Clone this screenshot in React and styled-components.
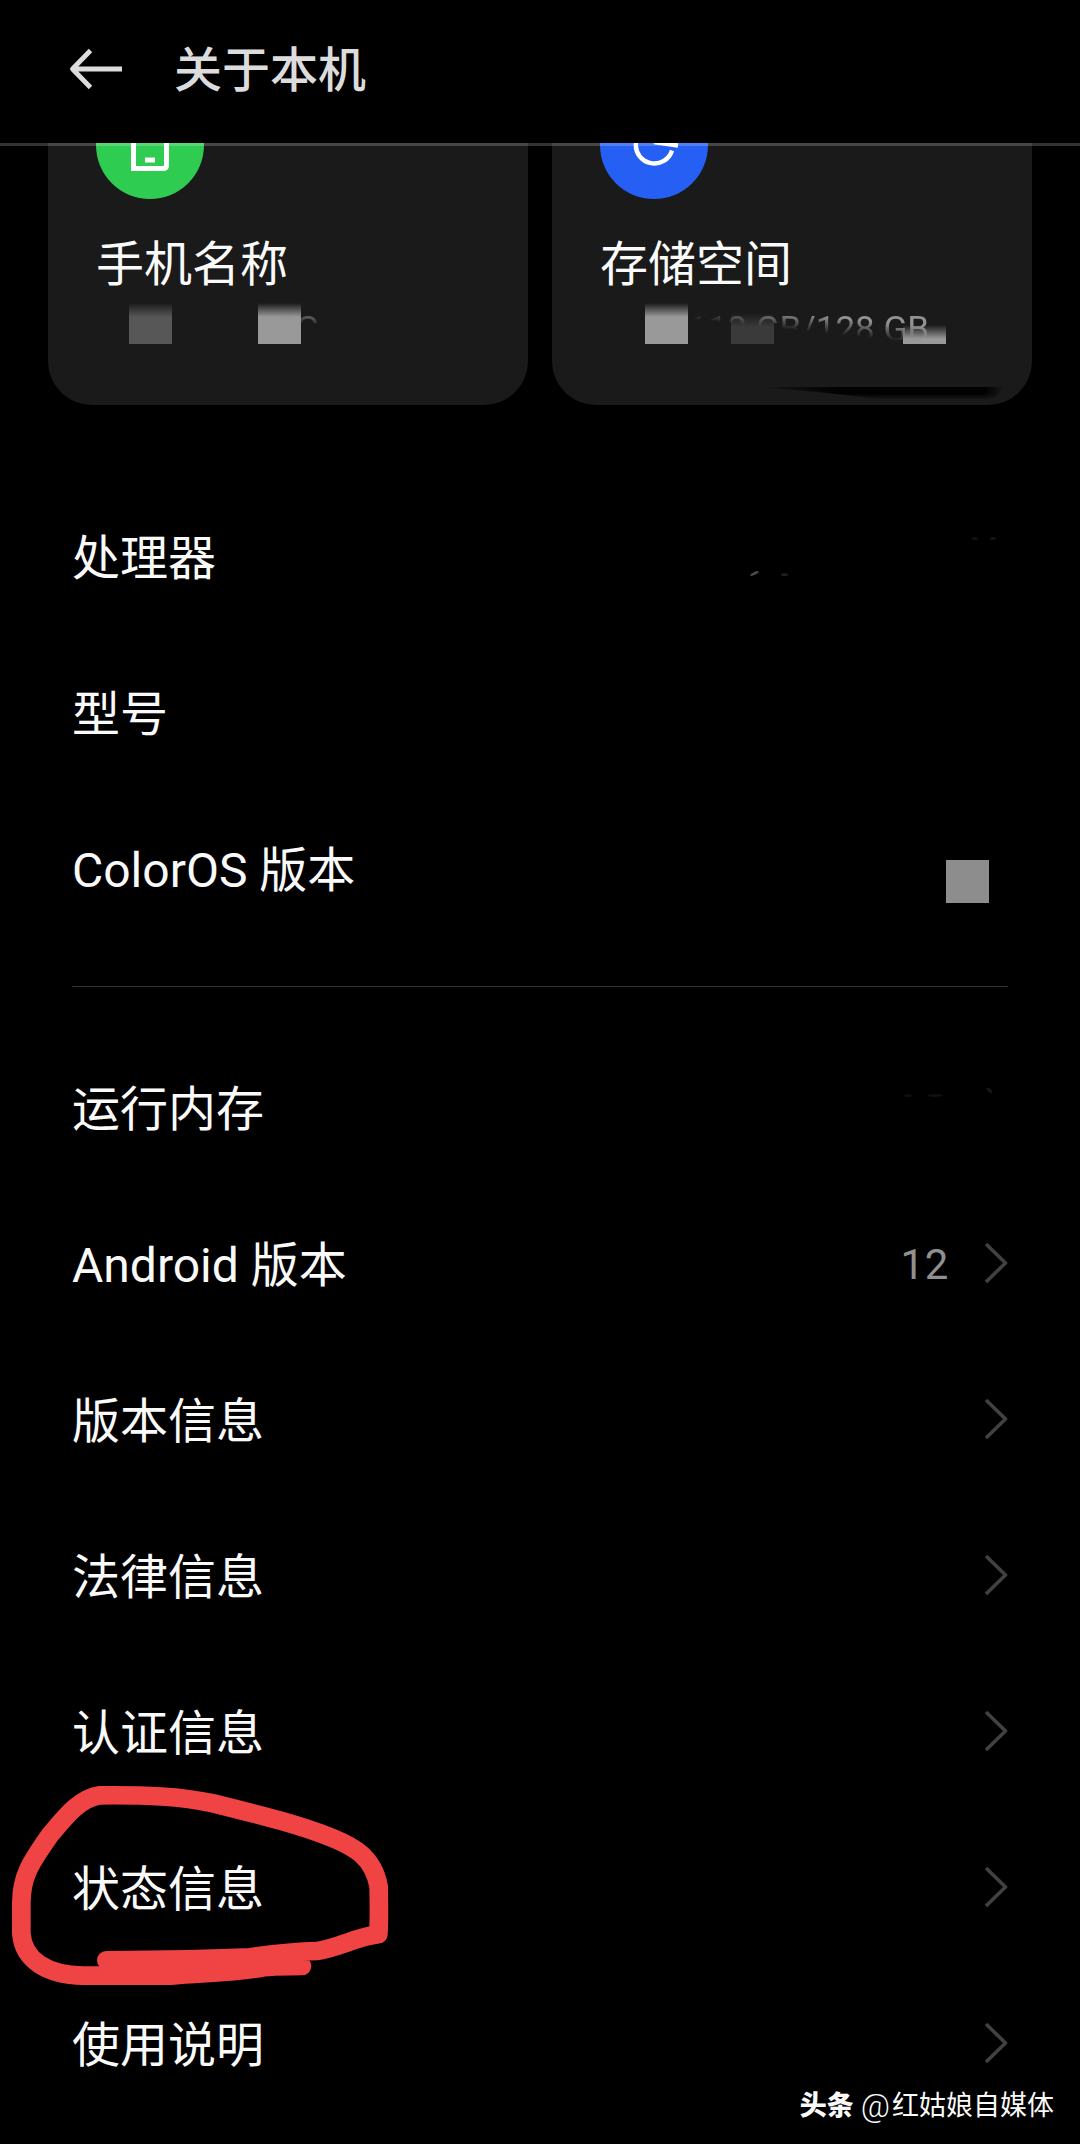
import React from 'react';
import styled, { createGlobalStyle } from 'styled-components';

const GlobalStyle = createGlobalStyle`
    * {
        box-sizing: border-box;
    }

    body {
        margin: 0;
        background: #000;
        font-family: Roboto, "Noto Sans CJK SC", sans-serif;
    }
`

const Screen = styled.div`
    position: relative;
    display: flex;
    flex-direction: column;
    width: 1080px;
    height: 2144px;
    overflow: hidden;
    background: #000;
    color: #fafafa;
`

const Header = styled.header`
    z-index: 1;
    display: flex;
    flex-shrink: 0;
    align-items: center;
    height: 146px;
    padding: 0 0 6px 69px;
    border-bottom: 3px solid rgba(255, 255, 255, 0.2);
`

const Title = styled.h1`
    margin: 0 0 0 50px;
    padding-top: 5px;
    color: #dcdcdc;
    font-size: 48px;
    font-weight: 500;
    line-height: 72px;
`

const Cards = styled.div`
    display: flex;
    flex-shrink: 0;
    gap: 24px;
    height: 262px;
    margin-top: -3px;
    padding: 0 48px;
`

const CardParent = styled.section`
    position: relative;
    flex: 1;
    padding-left: 48px;
    background: #1a1a1a;
    border-radius: 0 0 44px 44px;
`

/* Scrolled under the header, so only the lower half of the badge shows */
const BadgeClip = styled.div`
    display: flex;
    align-items: flex-end;
    height: 56px;
    overflow: hidden;
`

const Badge = styled.div`
    flex-shrink: 0;
    width: 108px;
    height: 108px;
    border-radius: 50%;
    background: ${props => props.$color};
`

const CardTitle = styled.div`
    margin-top: 30px;
    font-size: 48px;
    line-height: 72px;
`

const CardValue = styled.div`
    position: relative;
    z-index: 1;
    height: 44px;
    margin-top: 7px;
    padding-left: ${props => props.$indent}px;
    color: #929292;
    font-size: 35px;
    line-height: 44px;
    white-space: nowrap;
    mask-image: linear-gradient(186deg, #000 ${props => props.$fade}px, transparent ${props => props.$fade + 17}px);
`

const Patch = styled.div`
    position: absolute;
    left: ${props => props.$x}px;
    bottom: 61px;
    width: 43px;
    height: ${props => props.$h}px;
    background: linear-gradient(transparent, ${props => props.$color} 14px);
`

const Smear = styled.div`
    position: absolute;
    right: 28px;
    bottom: 6px;
    width: 250px;
    height: 12px;
    background: linear-gradient(#000 50%, rgba(0, 0, 0, 0.15));
    clip-path: polygon(0 0, 100% 0, 96% 100%, 50% 100%, 25% 40%);
    mask-image: linear-gradient(to right, transparent, #000 35%, #000 92%, transparent);
`

const List = styled.div`
    display: flex;
    flex-direction: column;
    padding: 74px 72px 0;
`

const RowParent = styled.div`
    position: relative;
    display: flex;
    flex-shrink: 0;
    align-items: center;
    height: 156px;
`

const RowLabel = styled.div`
    flex: 1;
    padding-top: 3px;
    font-size: 48px;
    line-height: 72px;
`

const RowValue = styled.div`
    margin-right: 35px;
    color: #909090;
    font-size: 42px;
    letter-spacing: 0.6px;
`

const Hidden = styled.div`
    width: 43px;
    height: 43px;
    margin: 25px 19px 0 0;
    background: #8d8d8d;
`

/* What is left of an erased value */
const Speck = styled.i`
    position: absolute;
    left: ${props => props.$x}px;
    top: ${props => props.$y}px;
    width: ${props => props.$w}px;
    height: 3px;
    border-radius: 50%;
    background: ${props => props.$color};
    transform: rotate(${props => props.$turn || 0}deg);
`

const Divider = styled.hr`
    flex-shrink: 0;
    width: 100%;
    height: 1px;
    margin: 39px 0 43px;
    border: 0;
    background: #303030;
`

const Scribble = styled.svg`
    position: absolute;
    left: 0;
    top: 1760px;
`

const Watermark = styled.div`
    position: absolute;
    right: 26px;
    bottom: 18px;
    display: flex;
    align-items: center;
    font-size: 27px;
    line-height: 40px;
`

const Brand = styled.span`
    margin-right: 7px;
    font-weight: 900;
`

const At = styled.span`
    margin-right: 2px;
    font-size: 32px;
    font-weight: 300;
`

const BackIcon = () => (
    <svg width="55" height="44" viewBox="0 0 55 44" fill="none" stroke="#dcdcdc" strokeWidth="4.8">
        <path d="M21.500 3.500L3.500 22L21.500 40.500M3.500 22H53" strokeLinejoin="round" />
    </svg>
)

const ChevronSvg = styled.svg`
    margin-bottom: 3px;
`

const Chevron = () => (
    <ChevronSvg width="24" height="42" viewBox="0 0 24 42" fill="none" stroke="#414141" strokeWidth="3.6">
        <path d="M2 2L21.500 21L2 40" strokeLinejoin="round" />
    </ChevronSvg>
)

const PhoneIcon = () => (
    <svg width="108" height="108" viewBox="0 0 108 108" fill="none" stroke="#fff" strokeWidth="5">
        <path d="M37.500 27V77.500H67Q70.500 77.500 70.500 74V27Z" />
        <path d="M49 69H59" />
    </svg>
)

const StorageIcon = () => (
    <svg width="108" height="108" viewBox="0 0 108 108" fill="none" stroke="#fff" strokeWidth="4.4">
        <path d="M54 35.500A18.500 18.500 0 1 0 72 59.500" />
        <path d="M54 51L78 54.500" />
    </svg>
)

/**
 * Component that displays a single entry of the list
 * @param {string} label - Name of the setting
 * @param {string} value - Value shown next to the arrow
 * @param {boolean} hidden - Shows a grey block in place of the value
 * @param {boolean} arrow - Whether the entry opens a page
 * @param {Array} specks - Faint marks left where the value was erased
 */
const Row = ({ label, value, hidden, arrow, specks = [] }) => (
    <RowParent>
        <RowLabel>{label}</RowLabel>
        {value && <RowValue>{value}</RowValue>}
        {hidden && <Hidden />}
        {arrow && <Chevron />}
        {specks.map(([x, y, w, color, turn]) => (
            <Speck key={x} $x={x} $y={y} $w={w} $color={color} $turn={turn} />
        ))}
    </RowParent>
)

const device = [
    {
        label: '处理器',
        specks: [
            [678, 93, 9, '#4a4a4a', -25],
            [709, 94, 7, '#1e1e1e'],
            [900, 58, 6, '#121212'],
            [918, 58, 6, '#161616']
        ]
    },
    { label: '型号' },
    { label: 'ColorOS 版本', hidden: true }
]

const system = [
    {
        label: '运行内存',
        specks: [
            [832, 64, 8, '#0e0e0e'],
            [855, 64, 16, '#101010'],
            [914, 59, 7, '#181818', 40]
        ]
    },
    { label: 'Android 版本', value: '12', arrow: true },
    { label: '版本信息', arrow: true },
    { label: '法律信息', arrow: true },
    { label: '认证信息', arrow: true },
    { label: '状态信息', arrow: true },
    { label: '使用说明', arrow: true }
]

const App = () => (
    <>
        <GlobalStyle />
        <Screen>
            <Header>
                <BackIcon />
                <Title>关于本机</Title>
            </Header>
            <Cards>
                <CardParent>
                    <BadgeClip>
                        <Badge $color="#2ecc50"><PhoneIcon /></Badge>
                    </BadgeClip>
                    <CardTitle>手机名称</CardTitle>
                    <CardValue $indent={180} $fade={24}>5G</CardValue>
                    <Patch $x={81} $h={41} $color="#575757" />
                    <Patch $x={210} $h={41} $color="#999" />
                </CardParent>
                <CardParent>
                    <BadgeClip>
                        <Badge $color="#265ff4"><StorageIcon /></Badge>
                    </BadgeClip>
                    <CardTitle>存储空间</CardTitle>
                    <CardValue $indent={88} $fade={30}>112 GB/128 GB</CardValue>
                    <Patch $x={93} $h={41} $color="#999" />
                    <Patch $x={179} $h={31} $color="#3a3a3a" />
                    <Patch $x={351} $h={19} $color="#999" />
                    <Smear />
                </CardParent>
            </Cards>
            <List>
                {device.map(row => <Row key={row.label} {...row} />)}
                <Divider />
                {system.map(row => <Row key={row.label} {...row} />)}
            </List>
            <Scribble width="420" height="240" viewBox="0 0 1260 720" fill="none" stroke="#f04343" strokeWidth="56" strokeLinecap="round" strokeLinejoin="round">
                <path d="M319 601C480 600 640 597 750 592C830 580 890 574 950 573C1010 566 1070 530 1135 523C1138 480 1137 430 1136 380C1120 290 1060 260 1000 235C900 195 800 170 640 130C540 108 440 105 300 106C240 115 200 165 150 225C90 310 64 350 64 430V520C70 600 140 645 250 647H510C600 637 700 640 790 622C830 617 870 619 906 618" />
            </Scribble>
            <Watermark>
                <Brand>头条</Brand>
                <At>@</At>
                <span>红姑娘自媒体</span>
            </Watermark>
        </Screen>
    </>
)

export default App;
